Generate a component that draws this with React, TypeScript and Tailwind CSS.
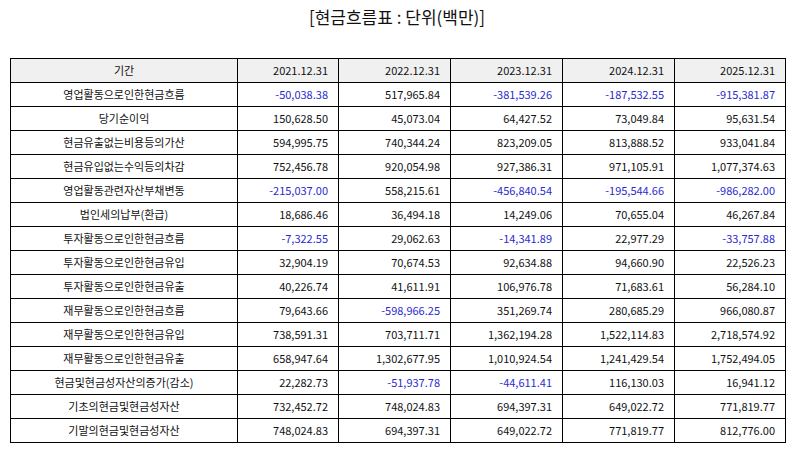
const years = ['2021.12.31', '2022.12.31', '2023.12.31', '2024.12.31', '2025.12.31'];

const rows: [string, string[]][] = [
  ['영업활동으로인한현금흐름', ['-50,038.38', '517,965.84', '-381,539.26', '-187,532.55', '-915,381.87']],
  ['당기순이익', ['150,628.50', '45,073.04', '64,427.52', '73,049.84', '95,631.54']],
  ['현금유출없는비용등의가산', ['594,995.75', '740,344.24', '823,209.05', '813,888.52', '933,041.84']],
  ['현금유입없는수익등의차감', ['752,456.78', '920,054.98', '927,386.31', '971,105.91', '1,077,374.63']],
  ['영업활동관련자산부채변동', ['-215,037.00', '558,215.61', '-456,840.54', '-195,544.66', '-986,282.00']],
  ['법인세의납부(환급)', ['18,686.46', '36,494.18', '14,249.06', '70,655.04', '46,267.84']],
  ['투자활동으로인한현금흐름', ['-7,322.55', '29,062.63', '-14,341.89', '22,977.29', '-33,757.88']],
  ['투자활동으로인한현금유입', ['32,904.19', '70,674.53', '92,634.88', '94,660.90', '22,526.23']],
  ['투자활동으로인한현금유출', ['40,226.74', '41,611.91', '106,976.78', '71,683.61', '56,284.10']],
  ['재무활동으로인한현금흐름', ['79,643.66', '-598,966.25', '351,269.74', '280,685.29', '966,080.87']],
  ['재무활동으로인한현금유입', ['738,591.31', '703,711.71', '1,362,194.28', '1,522,114.83', '2,718,574.92']],
  ['재무활동으로인한현금유출', ['658,947.64', '1,302,677.95', '1,010,924.54', '1,241,429.54', '1,752,494.05']],
  ['현금및현금성자산의증가(감소)', ['22,282.73', '-51,937.78', '-44,611.41', '116,130.03', '16,941.12']],
  ['기초의현금및현금성자산', ['732,452.72', '748,024.83', '694,397.31', '649,022.72', '771,819.77']],
  ['기말의현금및현금성자산', ['748,024.83', '694,397.31', '649,022.72', '771,819.77', '812,776.00']],
];

const colWidths = ['w-[227px]', 'w-[101px]', 'w-[112px]', 'w-[112px]', 'w-[112px]', 'w-[111px]'];

export default function App() {
  return (
    <div
      className="h-[452px] w-[794px] bg-white text-[#111]"
      style={{ fontFamily: '"Noto Sans CJK KR", "Noto Sans", sans-serif' }}
    >
      <h1 className="pt-[4px] text-center text-[17px] leading-[26px]">[현금흐름표 : 단위(백만)]</h1>

      <table className="mt-[28px] ml-[10px] table-fixed border-collapse text-[11px]">
        <colgroup>
          {colWidths.map((w, i) => (
            <col key={i} className={w} />
          ))}
        </colgroup>
        <thead>
          <tr className="h-[24px] bg-[#f0f0f0]">
            <th className="border border-black text-center font-normal">기간</th>
            {years.map((y) => (
              <th key={y} className="border border-black pr-[10px] text-right font-normal">
                {y}
              </th>
            ))}
          </tr>
        </thead>
        <tbody>
          {rows.map(([label, vals]) => (
            <tr key={label} className="h-[24px]">
              <td className="border border-black text-center">{label}</td>
              {vals.map((v, i) => (
                <td
                  key={i}
                  className={
                    v.startsWith('-')
                      ? 'border border-black pr-[10px] text-right text-[#2a2ad0]'
                      : 'border border-black pr-[10px] text-right'
                  }
                >
                  {v}
                </td>
              ))}
            </tr>
          ))}
        </tbody>
      </table>
    </div>
  );
}
